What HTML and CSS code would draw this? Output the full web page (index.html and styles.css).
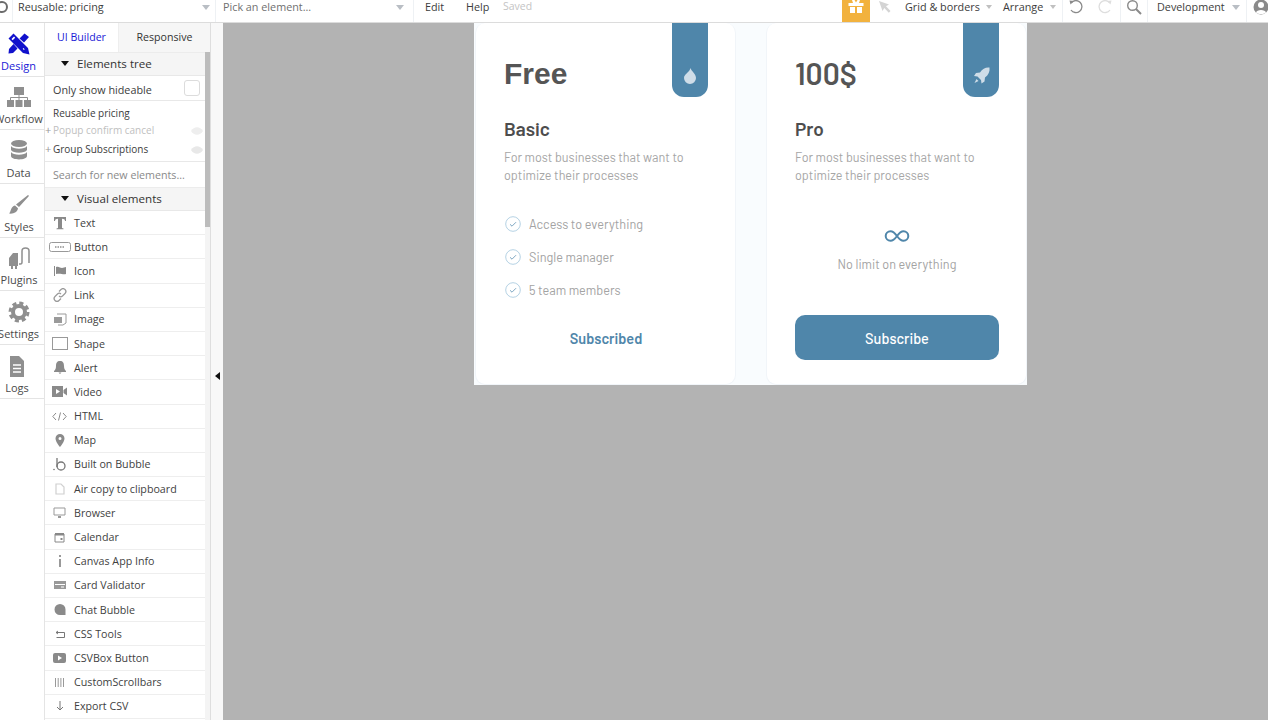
FILE: index.html
```html
<!DOCTYPE html>
<html lang="en">
<head>
<meta charset="utf-8">
<title>Reusable: pricing</title>
<link rel="stylesheet" href="styles.css">
</head>
<body>
<div class="app">
  <header class="topbar">
    <div class="seg seg-logo"><span class="logo-ring"></span></div>
    <div class="seg seg-name"><span>Reusable: pricing</span><i class="caret"></i></div>
    <div class="seg seg-pick"><span class="muted">Pick an element...</span><i class="caret"></i></div>
    <div class="seg seg-menu"><span class="edit">Edit</span><span class="help">Help</span><span class="saved">Saved</span></div>
    <div class="seg seg-gift">
      <svg width="18" height="14" viewBox="0 0 18 14"><path fill="#fff" d="M1.500 3h15v3h-15zM3 7h5v6H3zM10 7h5v6h-5z"/><path fill="#fff" d="M5 0h2.500L9 2.500 10.500 0H13l-1 3H6z"/></svg>
    </div>
    <div class="seg seg-cursor">
      <svg width="14" height="14" viewBox="0 0 14 14"><path fill="#d4d4d4" d="M1 1l10 3.500-3 1.800 4.500 4.700-1.700 1.700L6.300 8 4.500 11z"/></svg>
    </div>
    <div class="seg seg-grid"><span>Grid &amp; borders</span><i class="caret small"></i></div>
    <div class="seg seg-arrange"><span>Arrange</span><i class="caret small"></i></div>
    <div class="seg seg-undo">
      <svg width="16" height="16" viewBox="0 0 16 16"><path fill="none" stroke="#8a8a8a" stroke-width="1.300" d="M3.500 3.500A6 6 0 1 1 3 11"/><path fill="#8a8a8a" d="M1.500 1.500l4.500.5-3.500 3.500z"/></svg>
      <svg width="16" height="16" viewBox="0 0 16 16"><path fill="none" stroke="#dedede" stroke-width="1.300" d="M12.500 3.500A6 6 0 1 0 13 11"/><path fill="#dedede" d="M14.500 1.500L10 2l3.500 3.500z"/></svg>
    </div>
    <div class="seg seg-search">
      <svg width="16" height="16" viewBox="0 0 16 16"><circle cx="6.500" cy="6.500" r="4.800" fill="none" stroke="#8a8a8a" stroke-width="1.400"/><path stroke="#8a8a8a" stroke-width="2" d="M10 10l5 5"/></svg>
    </div>
    <div class="seg seg-dev"><span>Development</span><i class="caret"></i></div>
    <div class="seg seg-user">
      <svg width="16" height="16" viewBox="0 0 16 16"><circle cx="8" cy="8" r="7.500" fill="#8a8a8a"/><circle cx="8" cy="6" r="3" fill="#fff"/><path fill="#fff" d="M3 13.500C3.500 10 12.500 10 13 13.500 11 15.500 5 15.500 3 13.500z"/></svg>
    </div>
  </header>

  <div class="workspace">
    <nav class="sidenav">
      <a class="nav-item nav-narrow active">
        <svg width="24" height="24" viewBox="0 0 24 24"><path fill="#1111cc" d="M6.500 1.500l4 4L21 16l1.500 6.500L16 21 5.500 10.500l-4-4zM22 5l-4.500-3.500-5 5 4.500 4zM2 17l-.5 4.500 4.500-.5 4.500-4.500-4-4.500z"/><path fill="#fff" d="M7 4.500l1.200 1.200-2.500 2.500-1.200-1.200zM16.500 16l1.200 1.200-.8.800-1.200-1.200z"/></svg>
        <span>Design</span>
      </a>
      <a class="nav-item nav-narrow">
        <svg width="26" height="24" viewBox="0 0 26 24"><path fill="#8f8f8f" d="M8 2h10v8H8zM1 15h7v7H1zM9.500 15h7v7h-7zM18 15h7v7h-7z"/><path fill="none" stroke="#8f8f8f" d="M13 10v5M4.500 15v-2.500h17V15"/></svg>
        <span>Workflow</span>
      </a>
      <a class="nav-item nav-narrow">
        <svg width="20" height="24" viewBox="0 0 20 24"><ellipse cx="10" cy="4.500" rx="8" ry="3.500" fill="#8f8f8f"/><path fill="#8f8f8f" d="M2 7c2 3.500 14 3.500 16 0v4c-2 3.500-14 3.500-16 0zM2 13c2 3.500 14 3.500 16 0v4c0 4.500-16 4.500-16 0z"/></svg>
        <span>Data</span>
      </a>
      <a class="nav-item">
        <svg width="24" height="24" viewBox="0 0 24 24"><path fill="#8f8f8f" d="M21 2c.8.300 1 1 .5 1.600L12 14l-3-2.500zM8 12.500l3 2.700c-.5 3.800-4.500 6-9 5.300 2.200-1.500 1.500-7 6-8z"/></svg>
        <span>Styles</span>
      </a>
      <a class="nav-item">
        <svg width="24" height="24" viewBox="0 0 24 24"><path fill="#8f8f8f" d="M6 7h5v13H2v-8zM4 20h2v3H4zM8 20h2v3H8z"/><path fill="none" stroke="#8f8f8f" stroke-width="1.500" d="M12 18h1.500c1 0 1.500-.8 1.500-2V5c0-4 7-4 7 0v12"/></svg>
        <span>Plugins</span>
      </a>
      <a class="nav-item nav-narrow">
        <svg width="22" height="24" viewBox="0 0 22 24"><circle cx="11" cy="12" r="6" fill="none" stroke="#8f8f8f" stroke-width="4"/><circle cx="11" cy="12" r="9" fill="none" stroke="#8f8f8f" stroke-width="3" stroke-dasharray="4.100 2.970"/></svg>
        <span>Settings</span>
      </a>
      <a class="nav-item nav-logs">
        <svg width="18" height="24" viewBox="0 0 18 24"><path fill="#8f8f8f" d="M2 2h9l5 5v16H2z"/><path stroke="#fff" stroke-width="1.300" d="M5 11h8M5 14.500h8M5 18h8"/></svg>
        <span>Logs</span>
      </a>
    </nav>

    <aside class="panel">
      <div class="tabs">
        <span class="tab tab-on">UI Builder</span>
        <span class="tab">Responsive</span>
      </div>
      <div class="panel-body">
        <div class="panel-main">
          <div class="section-head"><i class="down"></i>Elements tree</div>
          <div class="hideable"><span>Only show hideable</span><span class="checkbox"></span></div>
          <div class="tree">
            <div class="tree-row">Reusable pricing</div>
            <div class="tree-row faded"><b class="plus">+</b>Popup confirm cancel
              <svg class="eye" width="12" height="8" viewBox="0 0 12 8"><path fill="#eeeeee" d="M0 4c3-5 9-5 12 0-3 5-9 5-12 0z"/></svg>
            </div>
            <div class="tree-row"><b class="plus">+</b>Group Subscriptions
              <svg class="eye" width="12" height="8" viewBox="0 0 12 8"><path fill="#e8e8e8" d="M0 4c3-5 9-5 12 0-3 5-9 5-12 0z"/></svg>
            </div>
          </div>
          <div class="search-new">Search for new elements...</div>
          <div class="section-head"><i class="down"></i>Visual elements</div>
          <ul class="elements">
            <li><span class="el-icon"><svg width="14" height="14" viewBox="0 0 14 14"><path fill="#8a8a8a" d="M1 1h12v4h-1c0-1.500-1-2.300-3-2.300V12l1.500.5v.8h-7v-.8L5 12V2.700C3 2.700 2 3.500 2 5H1z"/></svg></span>Text</li>
            <li><span class="el-icon"><svg width="22" height="10" viewBox="0 0 22 10"><rect x=".5" y=".5" width="21" height="9" rx="2" fill="#fff" stroke="#999"/><path stroke="#aaa" stroke-width="2" stroke-dasharray="1.500 1" d="M6 5h10"/></svg></span>Button</li>
            <li><span class="el-icon"><svg width="14" height="12" viewBox="0 0 14 12"><path fill="#8a8a8a" d="M1 1h1v10H1zM3 2c3-1 4 1 6 1l4-1v7c-3 1-5-1-10 0z"/></svg></span>Icon</li>
            <li><span class="el-icon"><svg width="14" height="14" viewBox="0 0 14 14"><g fill="none" stroke="#9a9a9a" stroke-width="1.200"><path d="M6 3.500l2-2a2.500 2.500 0 0 1 4 4L9.500 8a2.500 2.500 0 0 1-3.500 0"/><path d="M8 10.500l-2 2a2.500 2.500 0 0 1-4-4L4.500 6A2.500 2.500 0 0 1 8 6"/></g></svg></span>Link</li>
            <li><span class="el-icon"><svg width="14" height="14" viewBox="0 0 14 14"><path fill="none" stroke="#9a9a9a" d="M4 2h9v9l-3 2H5"/><path fill="#9a9a9a" d="M1 5h8v6H1z"/></svg></span>Image</li>
            <li><span class="el-icon"><svg width="16" height="13" viewBox="0 0 16 13"><rect x=".5" y=".5" width="15" height="12" fill="#fff" stroke="#999"/></svg></span>Shape</li>
            <li><span class="el-icon"><svg width="12" height="13" viewBox="0 0 12 13"><path fill="#8a8a8a" d="M6 0c3 0 4 2 4 5s1 4 2 5v1H0v-1c1-1 2-2 2-5s1-5 4-5zM4.500 11.500h3L6 13z"/></svg></span>Alert</li>
            <li><span class="el-icon"><svg width="15" height="11" viewBox="0 0 15 11"><path fill="#8a8a8a" d="M0 0h11v11H0zM11.500 4L15 1.500v8L11.500 7z"/><path fill="#fff" d="M4 3l4 2.500L4 8z"/></svg></span>Video</li>
            <li><span class="el-icon"><svg width="15" height="9" viewBox="0 0 15 9"><path fill="none" stroke="#8a8a8a" d="M4 1L.8 4.500 4 8M11 1l3.200 3.500L11 8M8.500.5l-2 8"/></svg></span>HTML</li>
            <li><span class="el-icon"><svg width="10" height="13" viewBox="0 0 10 13"><path fill="#8a8a8a" fill-rule="evenodd" d="M5 0a4.500 4.500 0 0 1 4.500 4.500C9.500 8 5 13 5 13S.5 8 .5 4.500A4.500 4.500 0 0 1 5 0zm0 3a1.500 1.500 0 1 0 0 3 1.500 1.500 0 0 0 0-3z"/></svg></span>Map</li>
            <li><span class="el-icon"><svg width="13" height="14" viewBox="0 0 13 14"><path fill="none" stroke="#777" stroke-width="1.300" d="M4 1v9"/><circle cx="8" cy="9" r="4" fill="none" stroke="#777" stroke-width="1.300"/><circle cx="1" cy="12.500" r=".8" fill="#777"/></svg></span>Built on Bubble</li>
            <li><span class="el-icon"><svg width="10" height="12" viewBox="0 0 10 12"><path fill="none" stroke="#d0d0d0" stroke-width="1.200" d="M1 1h5l3 3v7H1z"/></svg></span>Air copy to clipboard</li>
            <li><span class="el-icon"><svg width="13" height="12" viewBox="0 0 13 12"><path fill="none" stroke="#999" d="M1 1h11v7H1z"/><path fill="#999" d="M5 9h3v2H5z"/></svg></span>Browser</li>
            <li><span class="el-icon"><svg width="11" height="12" viewBox="0 0 11 12"><path fill="none" stroke="#888" d="M1 3h9v8H1z"/><path fill="#888" d="M1 2h9v2.500H1zM6.500 7h2v2h-2z"/></svg></span>Calendar</li>
            <li><span class="el-icon"><svg width="4" height="12" viewBox="0 0 4 12"><path fill="#999" d="M1 0h2v2H1zM1 4h2v8H1z"/></svg></span>Canvas App Info</li>
            <li><span class="el-icon"><svg width="12" height="8" viewBox="0 0 12 8"><path fill="#999" d="M0 0h12v8H0z"/><path fill="#fff" d="M1 3h10v1H1zM7 5.500h3v1H7z"/></svg></span>Card Validator</li>
            <li><span class="el-icon"><svg width="12" height="11" viewBox="0 0 12 11"><path fill="#8a8a8a" d="M6 0a5.500 5.500 0 0 1 5.500 5.500V11H6A5.500 5.500 0 0 1 6 0z"/></svg></span>Chat Bubble</li>
            <li><span class="el-icon"><svg width="10" height="8" viewBox="0 0 10 8"><path fill="none" stroke="#777" d="M3 1L1 2.500 3 4M1 2.500h8.500v5H1.500"/></svg></span>CSS Tools</li>
            <li><span class="el-icon"><svg width="13" height="10" viewBox="0 0 13 10"><rect width="13" height="10" rx="2" fill="#8a8a8a"/><path fill="#fff" d="M5 2.500L9 5 5 7.500z"/></svg></span>CSVBox Button</li>
            <li><span class="el-icon"><svg width="9" height="9" viewBox="0 0 9 9"><path stroke="#999" d="M.5 0v9M3.200 0v9M5.900 0v9M8.500 0v9"/></svg></span>CustomScrollbars</li>
            <li><span class="el-icon"><svg width="8" height="10" viewBox="0 0 8 10"><path fill="none" stroke="#777" d="M4 0v9M1 6l3 3 3-3"/></svg></span>Export CSV</li>
            <li></li>
          </ul>
        </div>
        <div class="scrolltrack"><div class="scrollthumb"></div></div>
      </div>
    </aside>

    <div class="gutter"><i class="collapse"></i></div>

    <main class="canvas">
      <section class="page">
        <article class="card">
          <div class="tag"><svg width="14" height="16" viewBox="0 0 14 16"><path fill="#cfdde8" d="M7.500 0c.5 3 5.500 5.500 5.500 10a6 6 0 0 1-12 0C1 6 6.500 4.500 7.500 0z"/></svg></div>
          <h2 class="price price-free">Free</h2>
          <h3 class="plan">Basic</h3>
          <p class="desc">For most businesses that want to optimize their processes</p>
          <ul class="features">
            <li><svg width="16" height="16" viewBox="0 0 16 16"><circle cx="8" cy="8" r="7.300" fill="none" stroke="#b5d2e4"/><path fill="none" stroke="#7ea7c2" d="M5 8.300l2 1.900 4-4"/></svg>Access to everything</li>
            <li><svg width="16" height="16" viewBox="0 0 16 16"><circle cx="8" cy="8" r="7.300" fill="none" stroke="#b5d2e4"/><path fill="none" stroke="#7ea7c2" d="M5 8.300l2 1.900 4-4"/></svg>Single manager</li>
            <li><svg width="16" height="16" viewBox="0 0 16 16"><circle cx="8" cy="8" r="7.300" fill="none" stroke="#b5d2e4"/><path fill="none" stroke="#7ea7c2" d="M5 8.300l2 1.900 4-4"/></svg>5 team members</li>
          </ul>
          <div class="action action-plain">Subscribed</div>
        </article>
        <article class="card">
          <div class="tag"><svg width="17" height="17" viewBox="0 0 17 17"><path fill="#cfdde8" d="M16.500.5c.5 4-1 7.500-4.500 10l-.5 4-3 2-.5-3.500-3.500-3.500-3.500-.5 2-3 4-.5C9.500 1.500 13 0 16.500.5zM3.500 12l2 2-4 2z"/></svg></div>
          <h2 class="price">100$</h2>
          <h3 class="plan">Pro</h3>
          <p class="desc">For most businesses that want to optimize their processes</p>
          <div class="unlimited">
            <svg width="26" height="12" viewBox="0 0 26 12"><path fill="none" stroke="#4f86aa" stroke-width="2" d="M13 6C10.500 2.500 9 1.200 6.500 1.200a4.800 4.800 0 0 0 0 9.600C9 10.800 10.500 9.500 13 6c2.500-3.500 4-4.800 6.500-4.800a4.800 4.800 0 0 1 0 9.600C17 10.800 15.500 9.500 13 6z"/></svg>
            <span>No limit on everything</span>
          </div>
          <div class="action action-solid">Subscribe</div>
        </article>
      </section>
    </main>
  </div>
</div>
</body>
</html>
```

FILE: styles.css
```css
* { box-sizing: border-box; }
html, body { margin: 0; height: 100%; overflow: hidden; }
body { font-family: "Open Sans", sans-serif; font-size: 10.700px; color: #3c3c3c; background: #fff; }
ul { list-style: none; margin: 0; padding: 0; }
h2, h3, p { margin: 0; }
i { display: block; font-style: normal; }

.app { height: 720px; display: flex; flex-direction: column; }

/* top bar */
.topbar { flex: 0 0 23px; display: flex; align-items: stretch; border-bottom: 1px solid #dcdcdc; background: #fff; overflow: hidden; }
.seg { flex: none; display: flex; align-items: center; height: 22px; padding-bottom: 9px; border-right: 1px solid #eef1f4; font-size: 10.800px; line-height: 15px; }
.caret { width: 0; height: 0; border-left: 4.500px solid transparent; border-right: 4.500px solid transparent; border-top: 5px solid #b9bec4; margin-top: 1px; }
.caret.small { border-left-width: 3.500px; border-right-width: 3.500px; border-top-width: 4px; border-top-color: #c0c0c0; }
.muted { color: #6f6f6f; }
.seg-logo { width: 13px; overflow: hidden; }
.logo-ring { flex: none; width: 12px; height: 12px; margin-left: -4px; border: 2.500px solid #6b6b6b; border-radius: 50%; }
.seg-name { width: 203px; padding-left: 5px; padding-right: 5.500px; justify-content: space-between; }
.seg-pick { width: 198px; padding-left: 7px; padding-right: 9.500px; justify-content: space-between; }
.seg-menu { width: 428px; border-right: 0; padding-left: 11px; }
.edit { width: 41px; }
.help { width: 37px; }
.saved { color: #c4c4c4; font-size: 10.500px; }
.seg-gift { width: 28px; padding: 0; border: 0; background: #f2b23e; justify-content: center; align-items: flex-start; }
.seg-cursor { width: 35px; border: 0; padding-left: 8px; }
.seg-grid { width: 98px; border: 0; padding-right: 11.500px; justify-content: space-between; }
.seg-arrange { width: 60px; padding-right: 6.500px; justify-content: space-between; }
.seg-undo { width: 58px; padding-left: 5px; gap: 13px; }
.seg-search { width: 27px; justify-content: center; }
.seg-dev { width: 99px; padding-left: 9px; padding-right: 6.500px; justify-content: space-between; }
.seg-user { flex: 1; border: 0; padding-left: 6px; }

.workspace { flex: 1; min-height: 0; display: flex; }

/* left nav */
.sidenav { flex: 0 0 45px; border-right: 1px solid #e4e4e4; overflow: hidden; }
.nav-item { display: flex; flex-direction: column; align-items: center; justify-content: flex-end; height: 53.700px; padding: 0 6px 3px 0; border-bottom: 1px solid #e4e4e4; font-size: 11px; line-height: 15px; color: #4a4a4a; white-space: nowrap; gap: 2px; }
.nav-item svg { flex: none; }
.nav-item.active { color: #1a1ad6; }
.nav-narrow { padding-right: 7px; }
.nav-logs { padding-right: 10px; }

/* panel */
.panel { flex: 0 0 166px; display: flex; flex-direction: column; min-height: 0; border-right: 1px solid #dedede; }
.tabs { flex: 0 0 29px; display: flex; font-size: 10.600px; }
.tab { display: flex; align-items: center; justify-content: center; flex: 1; padding-bottom: 2px; background: #f6f6f6; color: #333; }
.tab-on { flex: 0 0 74px; background: #fff; color: #1a1ad6; border-right: 1px solid #eee; }
.panel-body { flex: 1; min-height: 0; display: flex; overflow: hidden; }
.panel-main { flex: 0 0 160px; }
.scrolltrack { flex: 1; background: #f4f4f4; }
.scrollthumb { width: 5px; height: 175px; background: #bcbcbc; }
.section-head { height: 24px; padding: 0 0 2px 16px; display: flex; align-items: center; background: #f5f5f5; border-top: 1px solid #ececec; border-bottom: 1px solid #e8e8e8; font-size: 11.600px; color: #333; }
.down { width: 0; height: 0; border-left: 4px solid transparent; border-right: 4px solid transparent; border-top: 5px solid #111; margin-right: 8px; }
.hideable { height: 25px; display: flex; align-items: center; justify-content: space-between; padding: 2px 5px 0 8px; border-bottom: 1px solid #e8e8e8; font-size: 10.800px; }
.checkbox { width: 16px; height: 16px; margin-top: -2px; border: 1px solid #dcdcdc; border-radius: 3px; }
.tree { height: 61px; padding-top: 3px; border-bottom: 1px solid #e8e8e8; font-size: 10px; }
.tree-row { position: relative; height: 18px; line-height: 18px; padding-left: 8px; }
.faded { color: #c0c0c0; margin-top: -1px; margin-bottom: 1px; }
.plus { position: absolute; left: 0; font-weight: 400; color: #999; font-size: 11px; }
.eye { position: absolute; right: 2px; top: 6px; }
.search-new { height: 25px; line-height: 27px; padding-left: 8px; color: #8a8a8a; }
.elements li { height: 24.200px; display: flex; align-items: center; border-bottom: 1px solid #eee; color: #3f3f3f; }
.el-icon { flex: 0 0 29px; display: flex; justify-content: center; }

/* gutter */
.gutter { flex: 0 0 12px; background: #f8f8f8; position: relative; }
.collapse { position: absolute; left: 4px; top: 349px; width: 0; height: 0; border-top: 4.500px solid transparent; border-bottom: 4.500px solid transparent; border-right: 5px solid #111; }

/* canvas */
.canvas { flex: 1; background: #b3b3b3; padding-left: 251px; }
.page { width: 553px; height: 362px; padding-left: 1px; display: flex; gap: 30px; background: #f9fcfe; font-family: Barlow, Roboto, sans-serif; }
.card { position: relative; flex: 0 0 261px; display: flex; flex-direction: column; padding: 0 27px 0 28px; background: #fff; border: 1px solid #f1f5f9; border-top: 0; border-radius: 10px; }
.tag { position: absolute; left: 196px; top: 0; width: 36px; height: 74px; padding-bottom: 13px; display: flex; align-items: flex-end; justify-content: center; background: #4f86aa; border-radius: 0 0 12px 12px; }
.price { margin-top: 27px; height: 46px; line-height: 46px; font-size: 30px; font-weight: 600; color: #555; }
.price-free { font-family: "Liberation Sans", Arial, sans-serif; font-weight: 700; padding-top: 1px; }
.plan { margin-top: 21px; height: 24px; line-height: 24px; font-size: 19px; font-weight: 600; color: #4d4d4d; }
.desc { margin-top: 8px; height: 37px; width: 200px; font-size: 12.600px; line-height: 17.500px; color: #a6a6a6; }
.features { margin-top: 21px; height: 99px; font-size: 12.700px; color: #a3a3a3; }
.features li { height: 33px; display: flex; align-items: center; gap: 8px; padding-left: 1px; }
.unlimited { height: 99px; margin-top: 21px; display: flex; flex-direction: column; align-items: center; padding-top: 23px; gap: 14px; font-size: 12.600px; color: #a3a3a3; }
.action { margin-top: 9px; height: 45px; display: flex; align-items: center; justify-content: center; font-size: 14.500px; font-weight: 500; border-radius: 10px; }
.action-plain { color: #4f86aa; font-weight: 600; }
.action-solid { background: #4f86aa; color: #fff; }
```
